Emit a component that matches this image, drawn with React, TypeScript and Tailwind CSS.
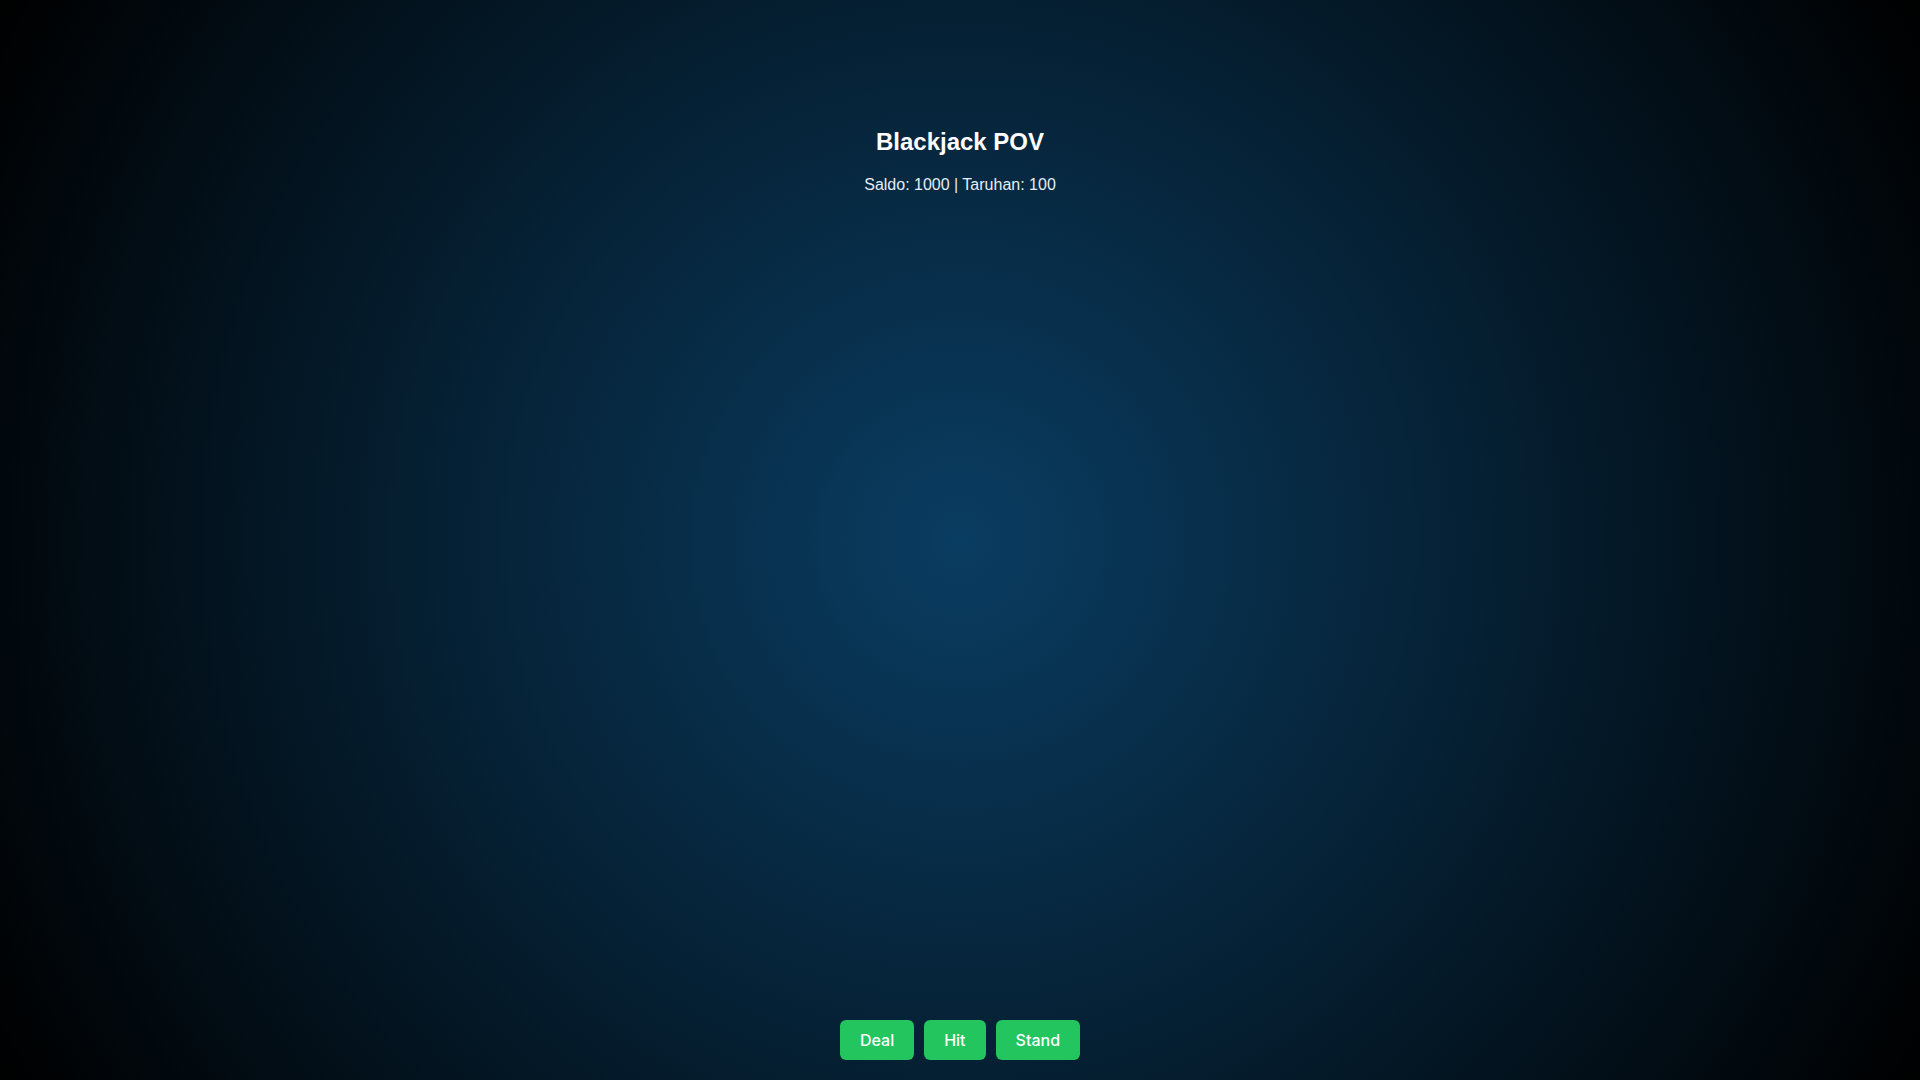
export default function App() {
  return (
    <div className="flex h-screen w-full flex-col items-center bg-[radial-gradient(circle,#0a3d62,#000)] font-['Liberation_Sans',Arial,sans-serif] text-white">
      <div className="flex flex-col items-center pt-[126px]">
        <h1 className="text-2xl font-bold">Blackjack POV</h1>
        <p className="mt-[15px] text-base text-[#e5eef6]">Saldo: 1000 | Taruhan: 100</p>
      </div>

      <div className="mt-auto mb-[20px] flex gap-[10px] font-['Inter',sans-serif]">
        <button className="h-10 rounded-md bg-[#22c55e] px-5 text-base font-medium text-white">
          Deal
        </button>
        <button className="h-10 rounded-md bg-[#22c55e] px-5 text-base font-medium text-white">
          Hit
        </button>
        <button className="h-10 rounded-md bg-[#22c55e] px-5 text-base font-medium text-white">
          Stand
        </button>
      </div>
    </div>
  );
}
